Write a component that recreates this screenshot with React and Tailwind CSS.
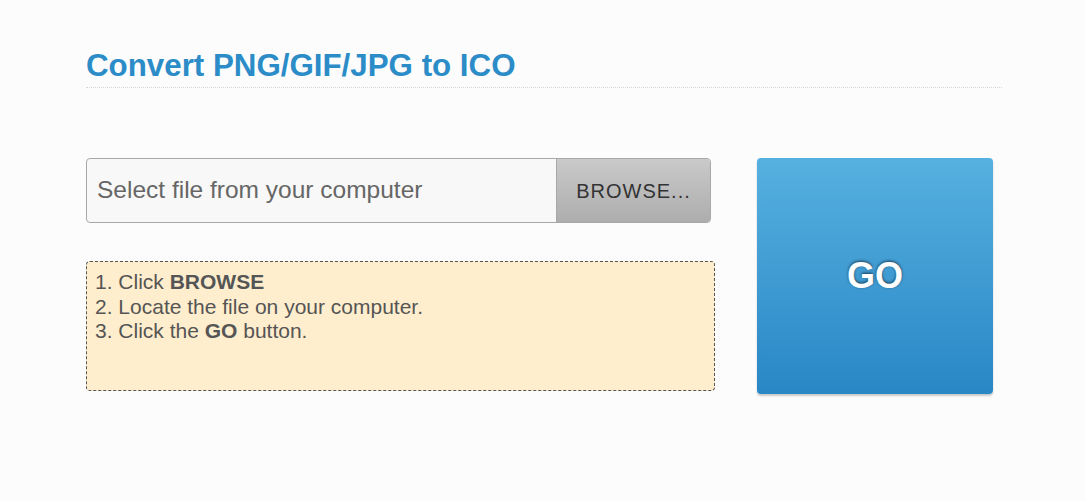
export default function App() {
  return (
    <div className="min-h-[501px] bg-[#fcfcfc] font-['Liberation_Sans',Arial,sans-serif]">
      <div className="ml-[86px] w-[916px] pt-[48px]">
        <h1 className="border-b border-dotted border-[#d6d6d6] pb-[3px] text-[31.3px] font-bold leading-[36px] text-[#2b8cc8]">
          Convert PNG/GIF/JPG to ICO
        </h1>
        <div className="mt-[70px] flex gap-[42px]">
          <div className="w-[629px]">
            <div className="flex h-[65px] w-[625px] overflow-hidden rounded-[4px] border border-[#a8a8a8] bg-[#f8f8f8]">
              <div className="flex flex-1 items-center pl-[10px] text-[24.5px] text-[#666]">
                Select file from your computer
              </div>
              <button className="w-[154px] border-l border-[#a8a8a8] bg-gradient-to-b from-[#cacaca] to-[#adadad] text-[20px] tracking-[1px] text-[#333]">
                BROWSE...
              </button>
            </div>
            <div className="mt-[38px] h-[130px] w-[629px] rounded-[4px] border border-dashed border-[#555] bg-[#ffeecd] px-[8px] pt-[8px] text-[21px] leading-[24.5px] text-[#555]">
              <div>
                1. Click <b>BROWSE</b>
              </div>
              <div>2. Locate the file on your computer.</div>
              <div>
                3. Click the <b>GO</b> button.
              </div>
            </div>
          </div>
          <button className="flex h-[236px] w-[236px] items-center justify-center rounded-[4px] bg-gradient-to-b from-[#56b0e0] to-[#2887c5] text-[36px] font-bold text-white shadow-[0_2px_2px_rgba(0,0,0,0.2)] [text-shadow:0_-1px_3px_rgba(0,0,0,0.6)]">
            GO
          </button>
        </div>
      </div>
    </div>
  );
}
